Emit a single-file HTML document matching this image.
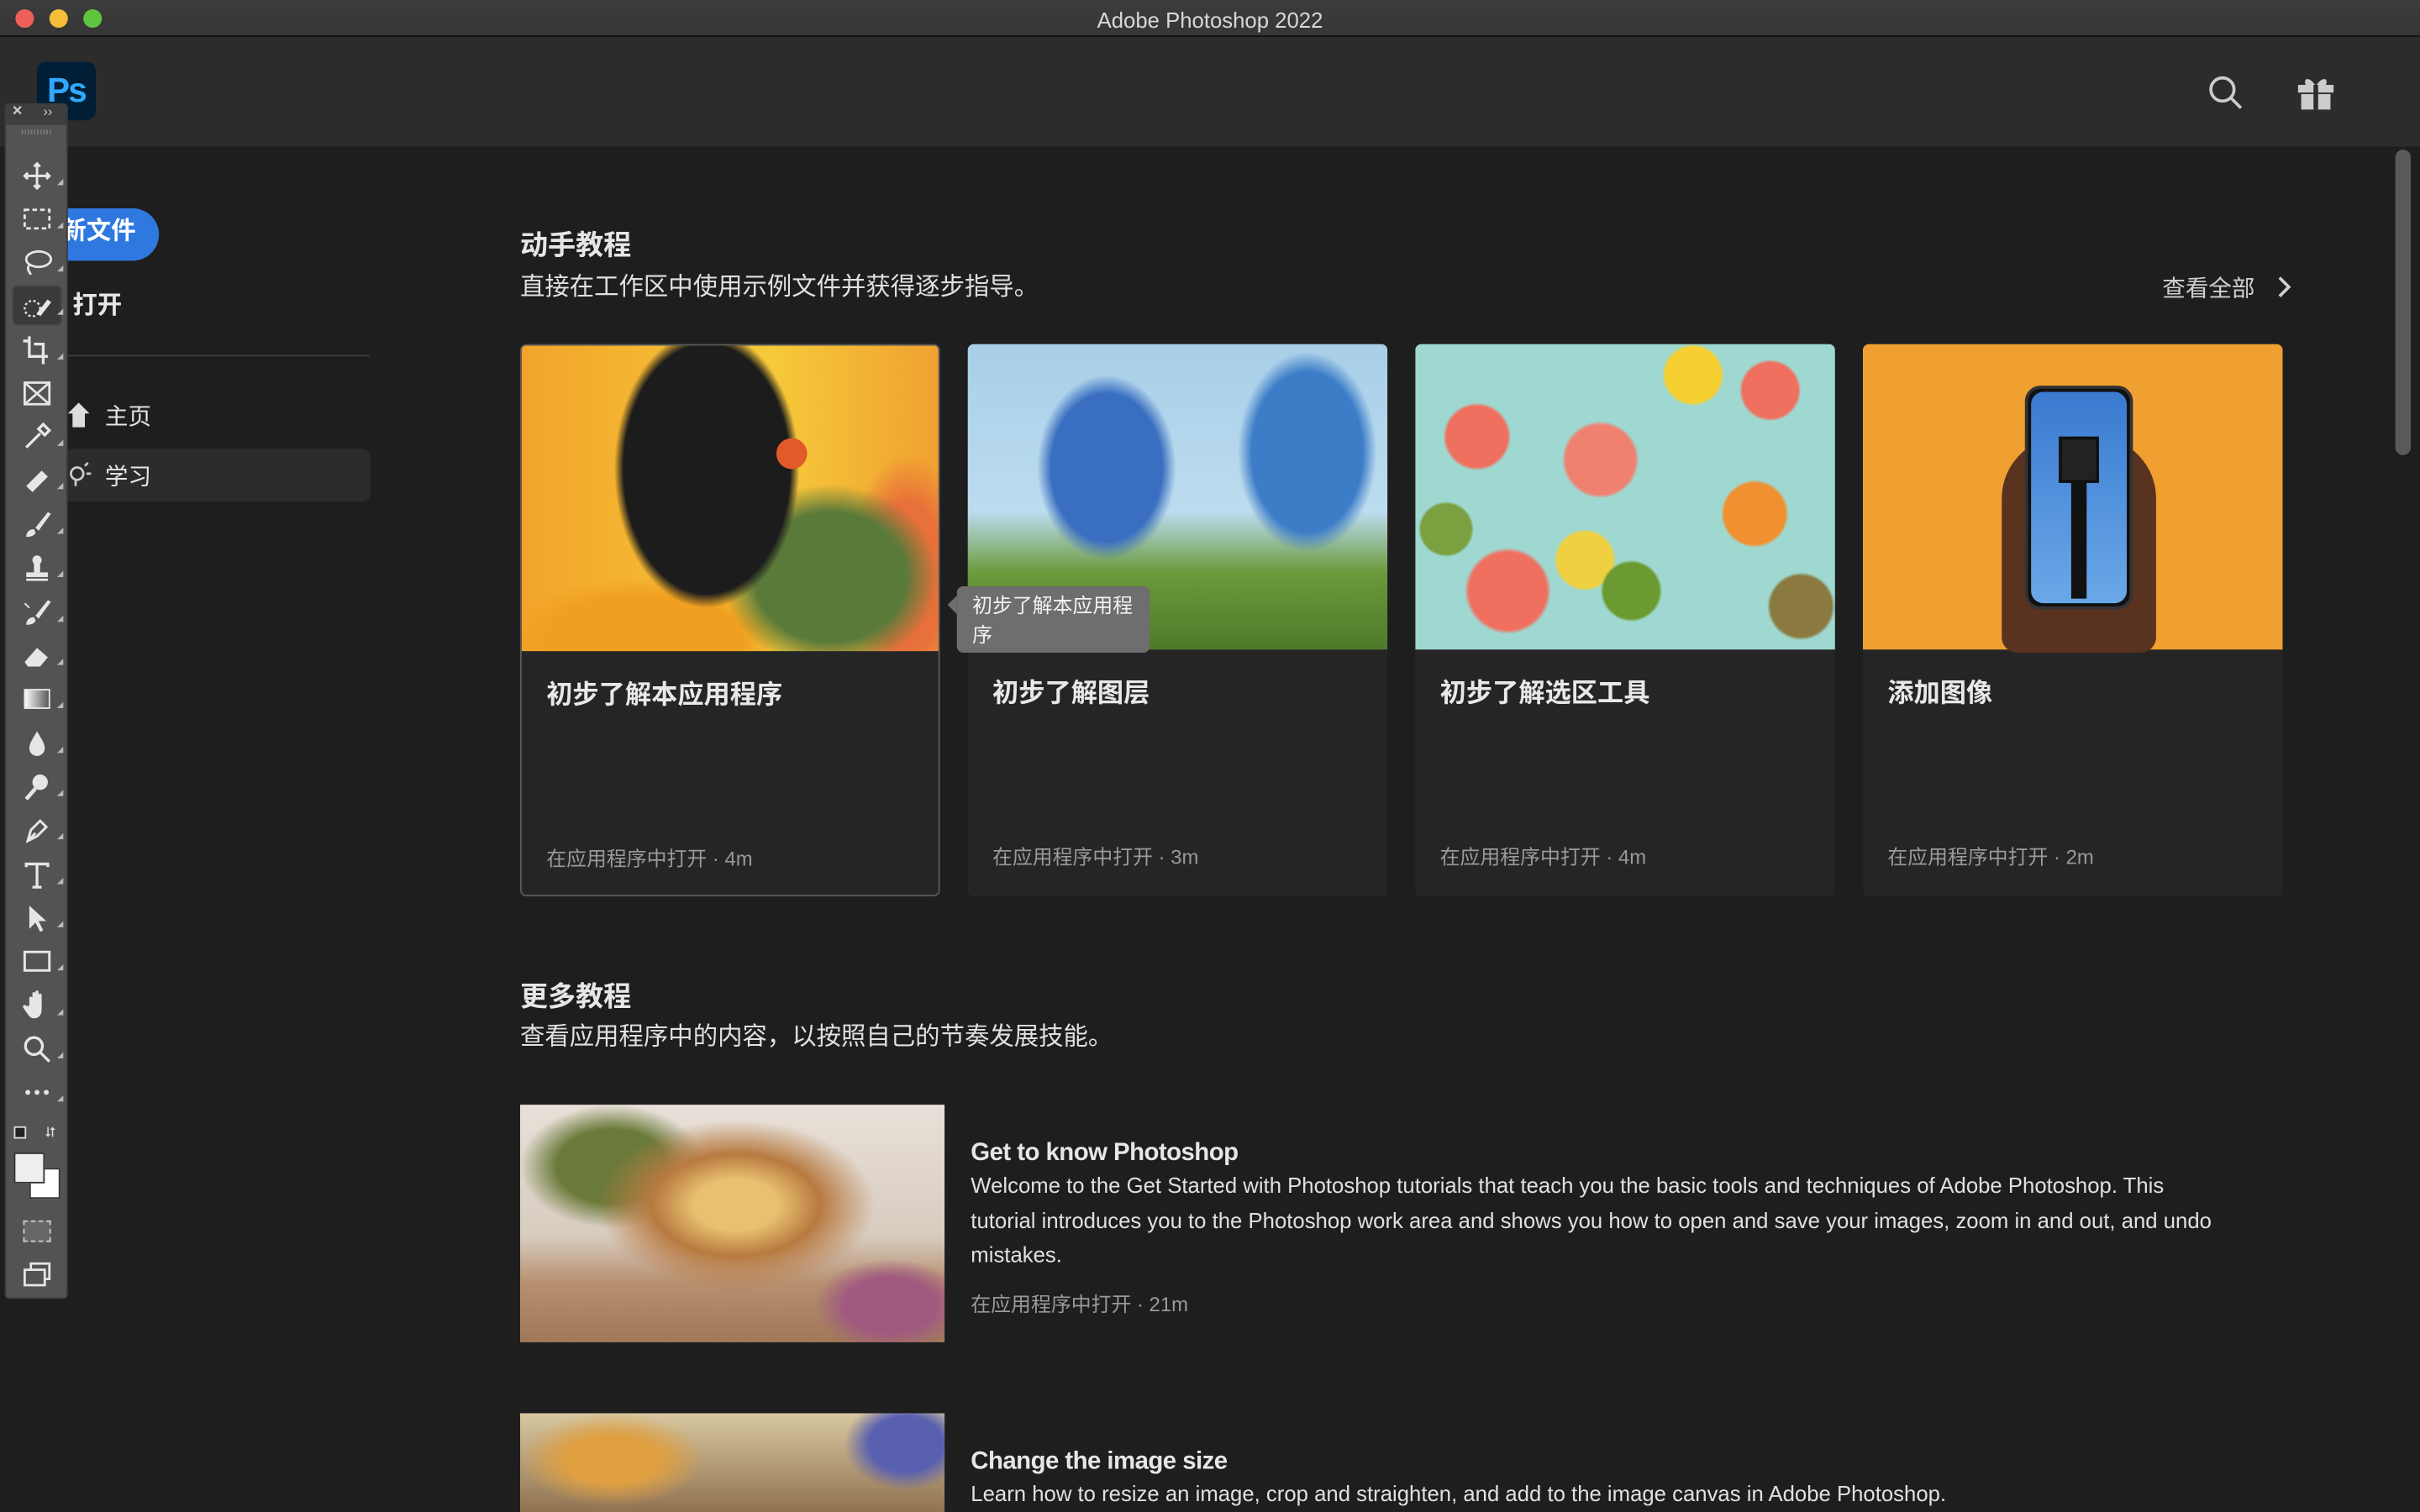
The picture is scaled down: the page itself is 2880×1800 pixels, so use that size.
<!DOCTYPE html>
<html><head><meta charset="utf-8"><style>
*{margin:0;padding:0;box-sizing:border-box}
html,body{width:2880px;height:1800px;overflow:hidden;background:#1e1e1e}
#w{width:1568px;height:980px;transform:scale(1.836735);transform-origin:0 0;position:relative;font-family:"Liberation Sans","Noto Sans CJK SC",sans-serif;color:#e6e6e6;background:#1e1e1e;overflow:hidden}
.a{position:absolute;white-space:nowrap}
.tb{left:0;top:0;width:1568px;height:24px;background:linear-gradient(#3c3c3c,#363636);border-bottom:1px solid #111;text-align:center;font-size:14px;line-height:26px;color:#d8d8d8}
.dot{top:6px;width:12px;height:12px;border-radius:50%}
.hd{left:0;top:24px;width:1568px;height:71px;background:#2c2c2c}
.card{top:223px;width:272px;height:358px;background:#252525;border-radius:4px;overflow:hidden}
.card .img{position:absolute;left:0;top:0;width:272px;height:198px}
.card .t{position:absolute;left:16px;top:212px;font-size:17px;font-weight:bold;color:#e8e8e8}
.card .m{position:absolute;left:16px;top:322px;font-size:13px;color:#9a9a9a}
.tools svg{position:absolute;left:10px;width:20px;height:20px}
.tri{position:absolute;left:33px;width:0;height:0;border-left:4px solid transparent;border-bottom:4px solid #bbb}
.desc{font-size:14px;letter-spacing:0;color:#e0e0e0}
</style></head><body><div id="w">
<div class="a tb">Adobe Photoshop 2022</div>
<div class="a dot" style="left:10px;background:#ee5f57"></div>
<div class="a dot" style="left:32px;background:#f6bd3b"></div>
<div class="a dot" style="left:54px;background:#5fc53f"></div>
<div class="a hd"></div>
<div class="a" style="left:24px;top:40px;width:38px;height:38px;background:#001e36;border-radius:6px;color:#31a8ff;font-weight:bold;font-size:22px;line-height:38px;text-align:center;letter-spacing:-1px">Ps</div>
<svg class="a" style="left:1430px;top:48px" width="24" height="24" viewBox="0 0 24 24" fill="none" stroke="#ccc" stroke-width="2"><circle cx="10" cy="10" r="7.5"/><path d="M15.5 15.5L22 22"/></svg>
<svg class="a" style="left:1488px;top:48px" width="25" height="24" viewBox="0 0 25 24" fill="#ccc"><rect x="1" y="7" width="23" height="5"/><rect x="3" y="13" width="19" height="10"/><rect x="11" y="7" width="3" height="16" fill="#2c2c2c"/><path d="M12 7C8 1 4 3 6 7zM13 7c4-6 8-4 6 0z"/></svg>
<!-- sidebar -->
<div class="a" style="left:20px;top:135px;width:83px;height:34px;background:#2f78df;border-radius:17px;color:#fff;font-weight:bold;font-size:16px;line-height:32px;padding-left:20px">新文件</div>
<div class="a" style="left:47px;top:184px;font-size:16px;font-weight:bold">打开</div>
<div class="a" style="left:44px;top:230px;width:196px;height:1px;background:#3a3a3a"></div>
<div class="a" style="left:40px;top:291px;width:200px;height:34px;background:#2c2c2c;border-radius:5px"></div>
<svg class="a" style="left:44px;top:261px" width="14" height="16" viewBox="0 0 14 16" fill="#ddd"><path d="M7 0L14 7H11V16H3V7H0z"/></svg>
<svg class="a" style="left:44px;top:299px" width="16" height="18" viewBox="0 0 16 18" fill="none" stroke="#ccc" stroke-width="1.5"><circle cx="6" cy="8" r="4"/><path d="M5 12v4M11 3l2-2M12 8h3"/></svg>
<div class="a" style="left:68px;top:259px;font-size:15px">主页</div>
<div class="a" style="left:68px;top:298px;font-size:15px">学习</div>
<!-- toolbar -->
<div class="a tools" style="left:3px;top:67px;width:41px;height:775px;background:#535353;border:1px solid #3c3c3c;border-radius:3px">
<div style="position:absolute;left:0;top:0;width:39px;height:13px;background:#3e3e3e"></div>
<div style="position:absolute;left:4px;top:-2px;font-size:11px;color:#ccc;font-weight:bold">×</div>
<div style="position:absolute;left:24px;top:-1px;font-size:9px;color:#ccc">››</div>
<div style="position:absolute;left:10px;top:16px;width:20px;height:3px;background:repeating-linear-gradient(90deg,#777 0 1px,transparent 1px 2px)"></div>
<div style="position:absolute;left:4px;top:117px;width:32px;height:26px;background:#3a3a3a;border:1px solid #444;border-radius:3px"></div>
<svg style="top:36px" viewBox="0 0 20 20" fill="none" stroke="#e6e6e6" stroke-width="1.6"><path d="M10 2v16M2 10h16M8 4l2-2 2 2M8 16l2 2 2-2M4 8l-2 2 2 2M16 8l2 2-2 2"/></svg>
<svg style="top:64px" viewBox="0 0 20 20" fill="none" stroke="#e6e6e6" stroke-width="1.5" stroke-dasharray="3 2"><rect x="2" y="4" width="16" height="12"/></svg>
<svg style="top:92px" viewBox="0 0 20 20" fill="none" stroke="#e6e6e6" stroke-width="1.5"><ellipse cx="11" cy="8" rx="8" ry="5"/><path d="M5 12c-2 2 0 4 1 6"/></svg>
<svg style="top:120px" viewBox="0 0 20 20" fill="none" stroke="#e6e6e6" stroke-width="1.3"><circle cx="7" cy="12" r="5" stroke-dasharray="1.5 1.5"/><path d="M11 16l7-9" stroke-width="3"/></svg>
<svg style="top:149px" viewBox="0 0 20 20" fill="none" stroke="#e6e6e6" stroke-width="1.8"><path d="M1 4h4M5 1v13h12M8 6h6v13"/></svg>
<svg style="top:177px" viewBox="0 0 20 20" fill="none" stroke="#e6e6e6" stroke-width="1.5"><rect x="2" y="3" width="16" height="14"/><path d="M2 3l16 14M18 3L2 17"/></svg>
<svg style="top:205px" viewBox="0 0 20 20" fill="none" stroke="#e6e6e6" stroke-width="1.8"><path d="M3 17l9-9M11 5l4 4M14 2l4 4-3 3-4-4z"/></svg>
<svg style="top:233px" viewBox="0 0 20 20" fill="#e6e6e6"><path d="M3 14l10-10 4 4-10 10z"/></svg>
<svg style="top:262px" viewBox="0 0 20 20" fill="#e6e6e6"><path d="M17 2l-8 10 2 2 8-11zM8 13c-3 0-5 2-5 5 3 0 6-1 6-3z"/></svg>
<svg style="top:290px" viewBox="0 0 20 20" fill="#e6e6e6"><circle cx="10" cy="5" r="3"/><rect x="8" y="7" width="4" height="6"/><rect x="3" y="13" width="14" height="3"/><rect x="3" y="17" width="14" height="1.5"/></svg>
<svg style="top:319px" viewBox="0 0 20 20" fill="#e6e6e6"><path d="M17 2l-8 10 2 2 8-11zM8 13c-3 0-5 2-5 5 3 0 6-1 6-3z"/><path d="M2 4l3 3" stroke="#e6e6e6"/></svg>
<svg style="top:347px" viewBox="0 0 20 20" fill="#e6e6e6"><path d="M2 14l8-9 7 6-5 6H4z"/></svg>
<svg style="top:375px" viewBox="0 0 20 20"><defs><linearGradient id="g"><stop offset="0" stop-color="#fff"/><stop offset="1" stop-color="#555"/></linearGradient></defs><rect x="2" y="4" width="16" height="12" fill="url(#g)" stroke="#e6e6e6"/></svg>
<svg style="top:404px" viewBox="0 0 20 20" fill="#e6e6e6"><path d="M10 2c-3 5-5 8-5 11a5 5 0 0010 0c0-3-2-6-5-11z"/></svg>
<svg style="top:432px" viewBox="0 0 20 20" fill="#e6e6e6"><circle cx="12" cy="7" r="5"/><path d="M9 11l-6 7" stroke="#e6e6e6" stroke-width="2.5"/></svg>
<svg style="top:460px" viewBox="0 0 20 20" fill="none" stroke="#e6e6e6" stroke-width="1.6"><path d="M4 17l2-7 6-6 4 4-6 6zM4 17l5-5"/></svg>
<svg style="top:489px" viewBox="0 0 20 20" fill="none" stroke="#e6e6e6" stroke-width="1.8"><path d="M3 5V3h14v2M10 3v15M7 18h6"/></svg>
<svg style="top:517px" viewBox="0 0 20 20" fill="#e6e6e6"><path d="M5 2v15l4-4 3 6 2-1-3-6h5z"/></svg>
<svg style="top:545px" viewBox="0 0 20 20" fill="none" stroke="#e6e6e6" stroke-width="1.6"><rect x="2" y="4" width="16" height="12"/></svg>
<svg style="top:573px" viewBox="0 0 20 20" fill="#e6e6e6"><path d="M5 11V6a1 1 0 012 0v4V3a1 1 0 012 0v7V2a1 1 0 012 0v8V4a1 1 0 012 0v9c0 4-2 6-5 6-2 0-3-1-5-4l-2-3a1 1 0 012-1z"/></svg>
<svg style="top:602px" viewBox="0 0 20 20" fill="none" stroke="#e6e6e6" stroke-width="1.8"><circle cx="8" cy="8" r="5.5"/><path d="M12 12l6 6"/></svg>
<svg style="top:630px" viewBox="0 0 20 20" fill="#e6e6e6"><circle cx="4" cy="10" r="1.6"/><circle cx="10" cy="10" r="1.6"/><circle cx="16" cy="10" r="1.6"/></svg>
<div class="tri" style="top:48px"></div><div class="tri" style="top:76px"></div><div class="tri" style="top:104px"></div><div class="tri" style="top:132px"></div><div class="tri" style="top:161px"></div><div class="tri" style="top:217px"></div><div class="tri" style="top:245px"></div><div class="tri" style="top:274px"></div><div class="tri" style="top:302px"></div><div class="tri" style="top:331px"></div><div class="tri" style="top:359px"></div><div class="tri" style="top:387px"></div><div class="tri" style="top:416px"></div><div class="tri" style="top:444px"></div><div class="tri" style="top:472px"></div><div class="tri" style="top:501px"></div><div class="tri" style="top:529px"></div><div class="tri" style="top:557px"></div><div class="tri" style="top:586px"></div><div class="tri" style="top:614px"></div><div class="tri" style="top:642px"></div>
<div style="position:absolute;left:5px;top:662px;width:8px;height:8px;border:1px solid #ddd;background:#222"></div>
<div style="position:absolute;left:25px;top:661px;font-size:9px;color:#ddd">⮃</div>
<div style="position:absolute;left:15px;top:689px;width:20px;height:20px;background:#fff;border:1px solid #333"></div>
<div style="position:absolute;left:5px;top:679px;width:20px;height:20px;background:#eee;border:1px solid #333"></div>
<div style="position:absolute;left:11px;top:723px;width:18px;height:14px;border:1px dashed #ccc;background:#666"></div>
<svg style="top:748px" viewBox="0 0 20 20" fill="none" stroke="#e6e6e6" stroke-width="1.5"><rect x="2" y="7" width="13" height="10"/><path d="M6 7V3h12v10h-3"/></svg>
</div>
<!-- scrollbar -->
<div class="a" style="left:1552px;top:97px;width:10px;height:198px;background:#5a5a5a;border-radius:5px"></div>
<!-- section 1 -->
<div class="a" style="left:337px;top:145px;font-size:18px;font-weight:bold">动手教程</div>
<div class="a" style="left:337px;top:172px;font-size:16px;color:#e0e0e0">直接在工作区中使用示例文件并获得逐步指导。</div>
<div class="a" style="left:1401px;top:176px;font-size:15px;color:#d0d0d0">查看全部</div>
<svg class="a" style="left:1474px;top:178px" width="12" height="16" viewBox="0 0 12 16" fill="none" stroke="#d0d0d0" stroke-width="2"><path d="M3 2l6 6-6 6"/></svg>

<div class="a card" style="left:337px;border:1px solid #5a5a5a">
<div class="img" style="background:radial-gradient(ellipse 60px 90px at 120px 80px,#1c1c1c 90%,transparent 100%),radial-gradient(ellipse 70px 60px at 200px 150px,#5a7a3a 70%,transparent 100%),radial-gradient(ellipse 90px 40px at 80px 190px,#f0a020 70%,transparent 100%),radial-gradient(ellipse 40px 80px at 250px 150px,#e8703a 60%,transparent 100%),linear-gradient(90deg,#f2a42a,#f6c93a 60%,#f0a030)"></div>
<div style="position:absolute;left:165px;top:60px;width:20px;height:20px;border-radius:50%;background:#e05a2a"></div>
<div class="t">初步了解本应用程序</div><div class="m">在应用程序中打开 · 4m</div></div>

<div class="a card" style="left:627px">
<div class="img" style="background:radial-gradient(ellipse 45px 60px at 90px 80px,#3a6ec0 80%,transparent 100%),radial-gradient(ellipse 45px 65px at 220px 70px,#3d7dc8 80%,transparent 100%),linear-gradient(#a8cfe8 0,#bcdcef 55%,#6a9a3a 75%,#4d7a2a 100%)"></div>
<div class="t">初步了解图层</div><div class="m">在应用程序中打开 · 3m</div></div>

<div class="a card" style="left:917px">
<div class="img" style="background:radial-gradient(circle 22px at 40px 60px,#f07060 90%,transparent),radial-gradient(circle 20px at 180px 20px,#f6d030 90%,transparent),radial-gradient(circle 25px at 120px 75px,#f08070 90%,transparent),radial-gradient(circle 22px at 220px 110px,#f09030 90%,transparent),radial-gradient(circle 28px at 60px 160px,#f07060 90%,transparent),radial-gradient(circle 20px at 140px 160px,#6a9a30 90%,transparent),radial-gradient(circle 22px at 250px 170px,#8a7a40 90%,transparent),radial-gradient(circle 18px at 20px 120px,#7aa040 90%,transparent),radial-gradient(circle 20px at 110px 140px,#f0d040 90%,transparent),radial-gradient(circle 20px at 230px 30px,#f07060 90%,transparent),#9fd8d0"></div>
<div class="t">初步了解选区工具</div><div class="m">在应用程序中打开 · 4m</div></div>

<div class="a card" style="left:1207px">
<div class="img" style="background:#f0a030"></div>
<div style="position:absolute;left:90px;top:60px;width:100px;height:140px;border-radius:40px 40px 10px 10px;background:#5a3220"></div>
<div style="position:absolute;left:105px;top:27px;width:70px;height:145px;border-radius:10px;background:#111;border:2px solid #333"></div>
<div style="position:absolute;left:109px;top:31px;width:62px;height:137px;border-radius:8px;background:linear-gradient(#3a7ad0,#6aa8e8)"></div>
<div style="position:absolute;left:135px;top:60px;width:10px;height:105px;background:#111"></div>
<div style="position:absolute;left:127px;top:60px;width:26px;height:30px;background:#222;border:2px solid #111"></div>
<div class="t">添加图像</div><div class="m">在应用程序中打开 · 2m</div></div>

<!-- tooltip -->
<div class="a" style="left:620px;top:380px;width:125px;height:43px;background:#6e6e6e;border-radius:4px;font-size:13px;line-height:19px;color:#f2f2f2;padding:3px 10px;white-space:normal">初步了解本应用程序</div>
<div class="a" style="left:614px;top:386px;width:0;height:0;border-top:6px solid transparent;border-bottom:6px solid transparent;border-right:6px solid #6e6e6e"></div>

<!-- section 2 -->
<div class="a" style="left:337px;top:632px;font-size:18px;font-weight:bold">更多教程</div>
<div class="a" style="left:337px;top:658px;font-size:16px;color:#e0e0e0">查看应用程序中的内容，以按照自己的节奏发展技能。</div>

<div class="a" style="left:337px;top:716px;width:275px;height:154px;background:radial-gradient(ellipse 90px 55px at 140px 65px,#e8c070 30%,#b87a40 60%,transparent 100%),radial-gradient(ellipse 60px 40px at 60px 40px,#6a7a3a 60%,transparent 100%),radial-gradient(ellipse 50px 30px at 240px 130px,#a05a80 60%,transparent 100%),linear-gradient(#e8e0d8 0,#d8ccc0 55%,#b89070 75%,#a07858 100%)"></div>
<div class="a" style="left:629px;top:739px;font-size:16px;font-weight:bold;letter-spacing:-0.3px">Get to know Photoshop</div>
<div class="a desc" style="left:629px;top:760px">Welcome to the Get Started with Photoshop tutorials that teach you the basic tools and techniques of Adobe Photoshop. This</div>
<div class="a desc" style="left:629px;top:783px">tutorial introduces you to the Photoshop work area and shows you how to open and save your images, zoom in and out, and undo</div>
<div class="a desc" style="left:629px;top:805px">mistakes.</div>
<div class="a" style="left:629px;top:835px;font-size:13px;color:#9a9a9a">在应用程序中打开 · 21m</div>

<div class="a" style="left:337px;top:916px;width:275px;height:70px;background:radial-gradient(ellipse 40px 30px at 250px 20px,#5a60b0 60%,transparent 100%),radial-gradient(ellipse 60px 30px at 60px 30px,#e0a040 50%,transparent 100%),linear-gradient(#d8c8a0,#8a6a4a)"></div>
<div class="a" style="left:629px;top:939px;font-size:16px;font-weight:bold;letter-spacing:-0.3px">Change the image size</div>
<div class="a desc" style="left:629px;top:960px">Learn how to resize an image, crop and straighten, and add to the image canvas in Adobe Photoshop.</div>
</div></body></html>
